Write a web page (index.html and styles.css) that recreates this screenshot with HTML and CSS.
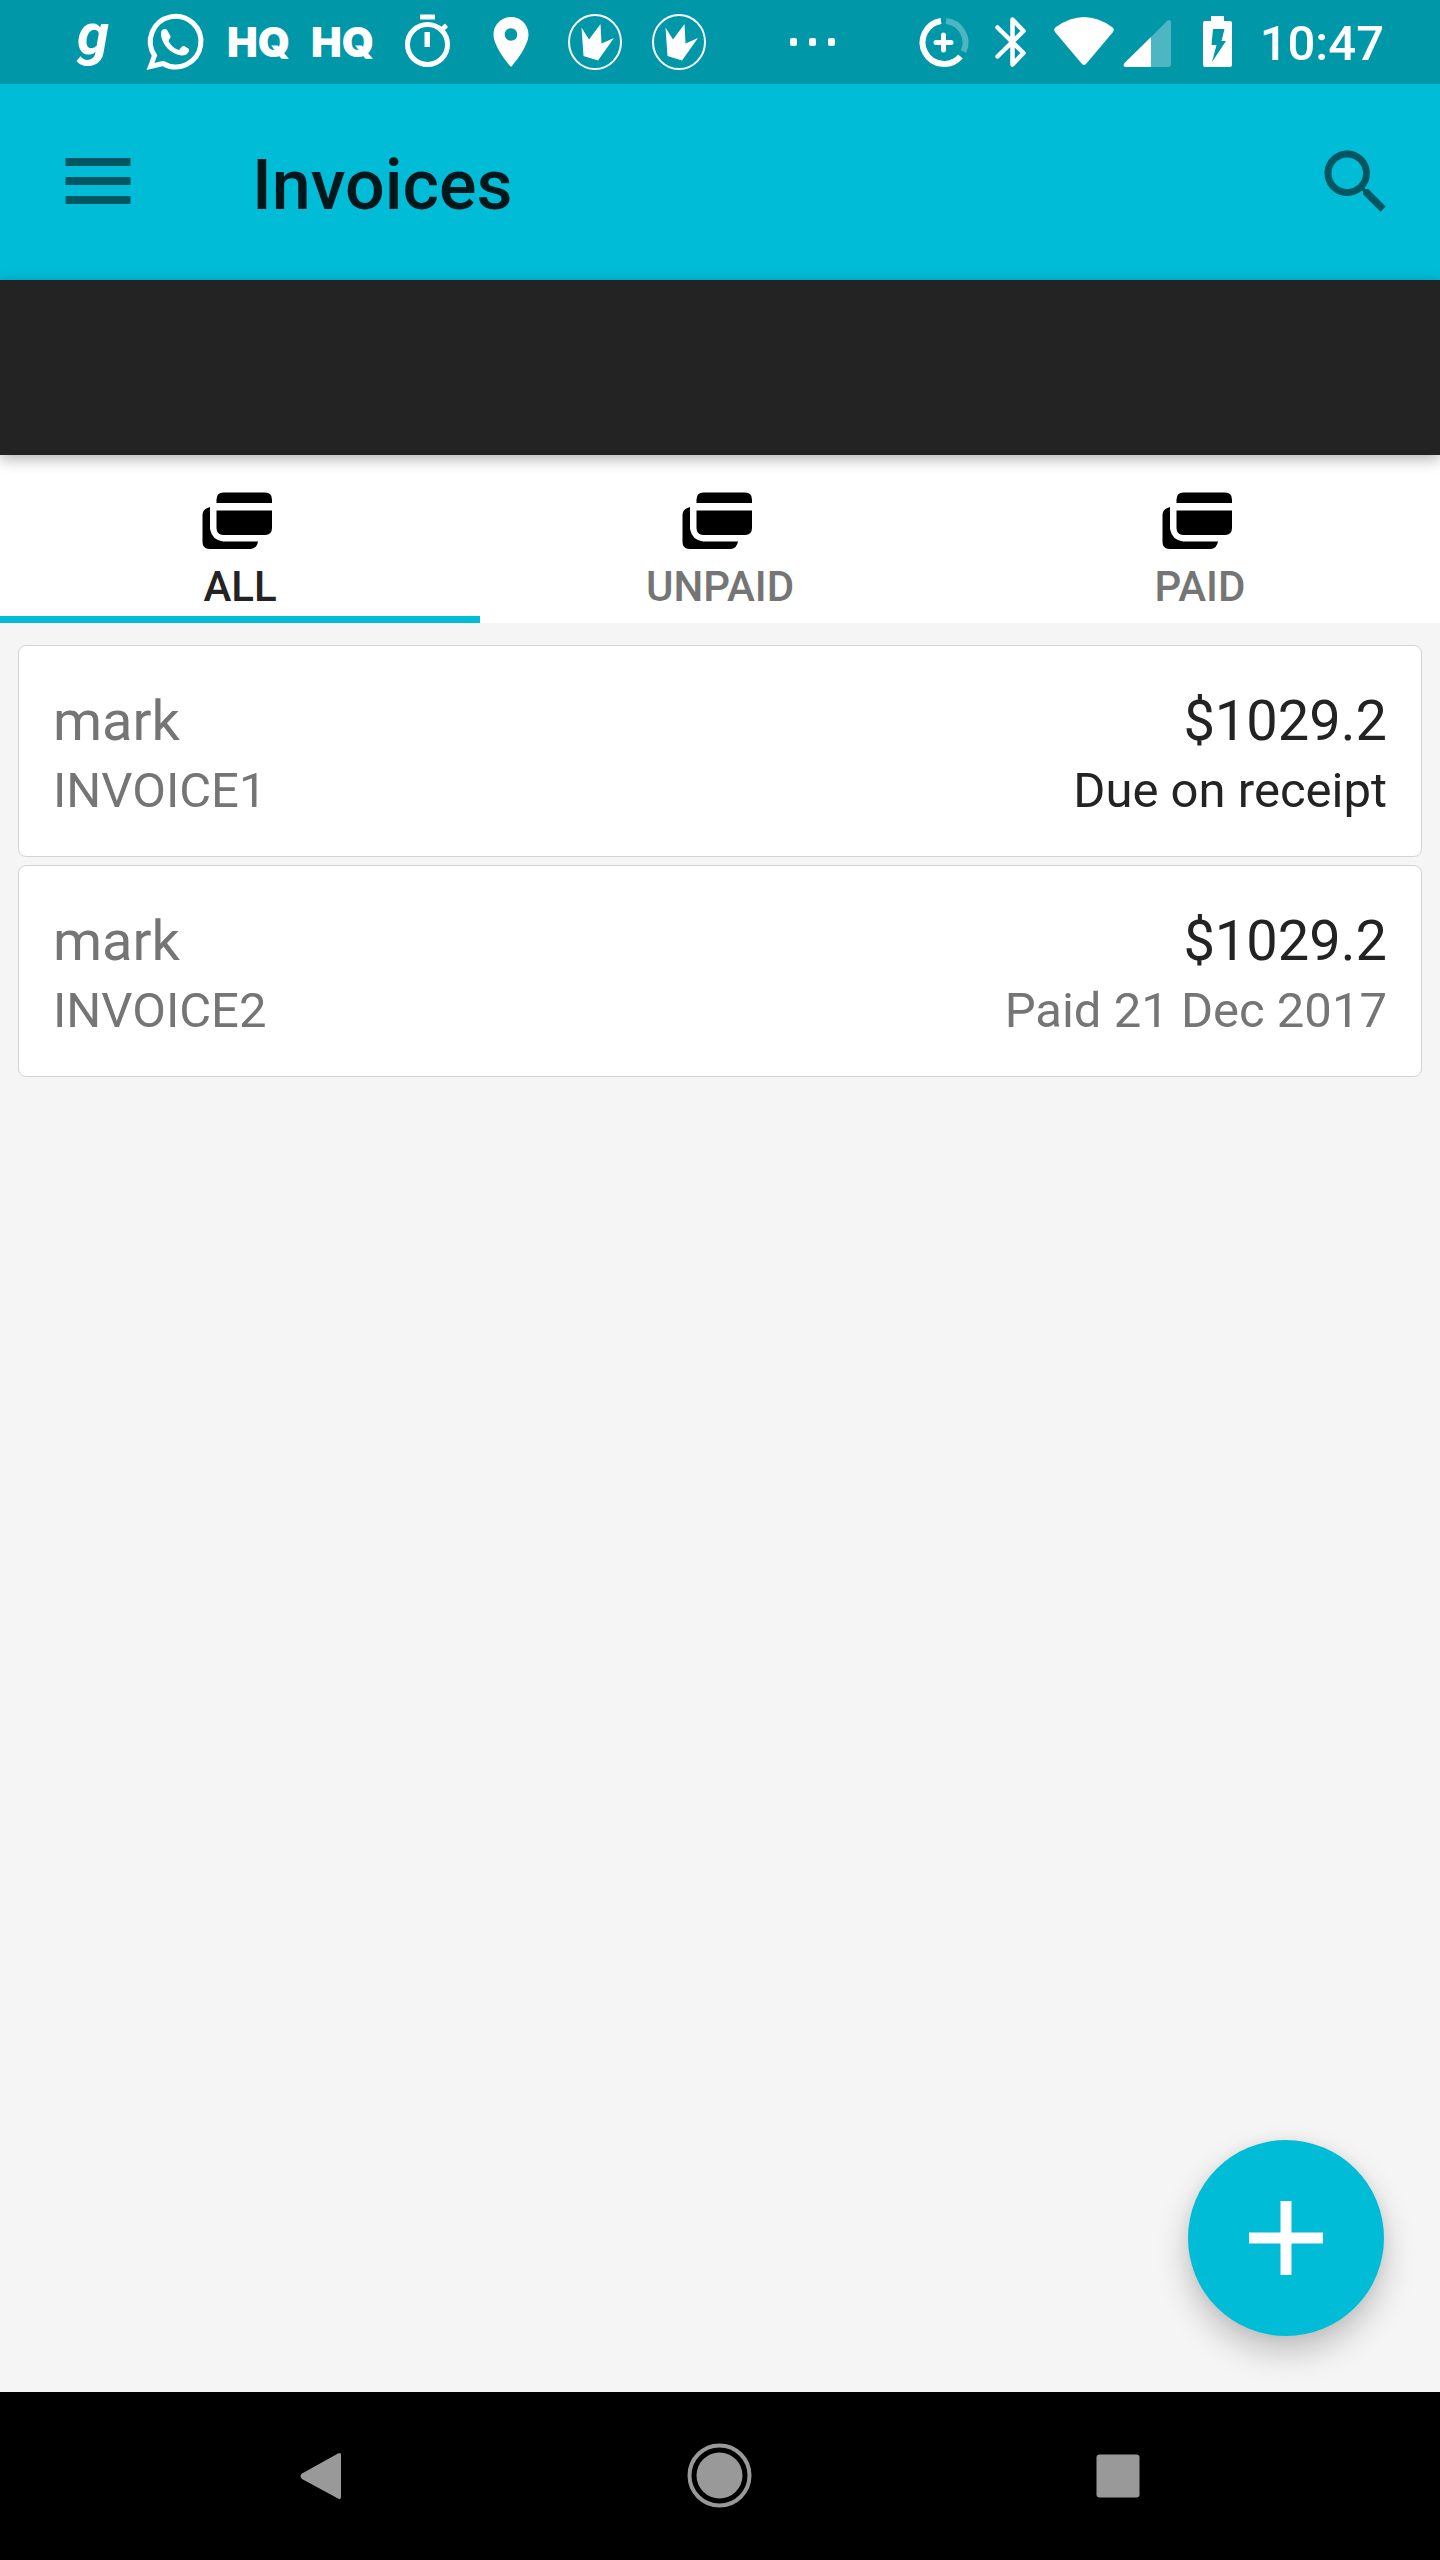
FILE: index.html
```html
<!DOCTYPE html>
<html lang="en">
<head>
<meta charset="utf-8">
<meta name="viewport" content="width=device-width, initial-scale=1">
<title>Invoices</title>
<link rel="stylesheet" href="styles.css">
</head>
<body>
<svg class="defs" aria-hidden="true">
  <symbol id="cards" viewBox="0 0 84 84">
    <path d="M18.500 25V21.500Q18.500 14.500 25.500 14.500H67Q74 14.500 74 21.500V25Z"/>
    <path d="M18.500 32.500H74V50Q74 57 67 57H25.500Q18.500 57 18.500 50Z"/>
    <path d="M12 29Q4.500 31 4.500 37V64Q4.500 71 11.500 71H53Q59 70 60 63.500H25Q14 62 12 51Z"/>
  </symbol>
  <symbol id="crown" viewBox="0 0 84 84">
    <ellipse cx="41" cy="42" rx="26" ry="27" fill="none" stroke="currentColor" stroke-width="2"/>
    <path d="M27.500 27.500L35 39.500 46.500 24 47.500 43.500 60 38 44 60.500 29.500 56Z"/>
  </symbol>
</svg>
<div class="screen">
  <div class="status-bar">
    <div class="notifications">
      <svg class="note" viewBox="0 0 84 84"><text class="mark-g" x="27" y="54">g</text></svg>
      <svg class="note" viewBox="0 0 84 84">
        <path d="M16.500 66.500L20.500 55.500A25.300 25.300 0 1 1 29 63.500Z" fill="none" stroke="currentColor" stroke-width="5"/>
        <path d="M27 33Q27 30 30 29Q32 28.500 33 30L36.500 36Q37 38 35.500 39L34.500 41Q38 48 45 50L47.500 47Q49 45.500 51 46.500L55 49V51Q53 56 47 55.500Q31 52 27 36Z"/>
      </svg>
      <svg class="note" viewBox="0 0 84 84"><text class="mark-hq" x="9" y="57">HQ</text></svg>
      <svg class="note" viewBox="0 0 84 84"><text class="mark-hq" x="9" y="57">HQ</text></svg>
      <svg class="note" viewBox="0 0 84 84">
        <circle cx="41.500" cy="44.500" r="20" fill="none" stroke="currentColor" stroke-width="5"/>
        <path d="M34 14.500H49V19.500H34ZM38.500 32H44V47H38.500ZM55 27L59 23.500 62 27 58 31Z"/>
      </svg>
      <svg class="note" viewBox="0 0 84 84">
        <path transform="translate(11 12) scale(2.500)" d="M12 2C8.130 2 5 5.130 5 9c0 5.250 7 13 7 13s7-7.750 7-13c0-3.870-3.130-7-7-7zm0 9.500c-1.380 0-2.500-1.120-2.500-2.500s1.120-2.500 2.500-2.500 2.500 1.120 2.500 2.500-1.120 2.500-2.500 2.500z"/>
      </svg>
      <svg class="note"><use href="#crown"/></svg>
      <svg class="note"><use href="#crown"/></svg>
      <svg class="note more" viewBox="0 0 84 84">
        <rect x="20" y="38" width="7" height="8" rx="2"/><rect x="39" y="38" width="7" height="8" rx="2"/><rect x="58" y="38" width="7" height="8" rx="2"/>
      </svg>
    </div>
    <div class="system">
      <svg class="sys" viewBox="0 0 68 84" fill="none" stroke="currentColor" stroke-width="6">
        <path d="M31 21A21.600 21.600 0 1 0 50.500 56.500"/>
        <path d="M36 21A21.600 21.600 0 0 1 53.500 51.500" opacity=".3"/>
        <path d="M33.500 35V50M26 42.500H41" stroke-width="5" stroke-linecap="round"/>
      </svg>
      <svg class="sys" viewBox="0 0 68 84" fill="none" stroke="currentColor" stroke-width="4.500" stroke-linecap="round" stroke-linejoin="round">
        <path d="M19.500 27.500L45.500 53 34.500 64.500V19.500L45.500 31 19.500 56.500"/>
      </svg>
      <svg class="sys" viewBox="0 0 68 84"><path d="M10 27Q38 7 66 27Q69 29 67 32L40 64Q38 66 36 64L9 32Q7 29 10 27Z"/></svg>
      <svg class="sys" viewBox="0 0 68 84">
        <path d="M37 37L10.500 63Q8 67 12 67H37Z"/>
        <path d="M37 37L53 21Q57 18.500 57 23V64Q57 67 54 67H37Z" opacity=".3"/>
      </svg>
      <svg class="sys" viewBox="0 0 68 84">
        <path fill-rule="evenodd" d="M29 16H42V21H48Q50 21 50 23V65Q50 67 48 67H23Q21 67 21 65V23Q21 21 23 21H29ZM31 29L29.500 45H34.500L30 62 44 41H39.500L42.500 29Z"/>
      </svg>
      <time class="clock">10:47</time>
    </div>
  </div>

  <header class="app-bar">
    <button class="icon-button" aria-label="Open menu"><svg class="icon" viewBox="0 0 84 84"><path d="M9.500 18H74.500V26H9.500ZM9.500 37H74.500V45H9.500ZM9.500 56H74.500V64H9.500Z"/></svg></button>
    <h1 class="title">Invoices</h1>
    <button class="icon-button" aria-label="Search"><svg class="icon" viewBox="0 0 24 24"><path d="M15.500 14h-.790l-.280-.270C15.410 12.590 16 11.110 16 9.500 16 5.910 13.090 3 9.500 3S3 5.910 3 9.500 5.910 16 9.500 16c1.610 0 3.090-.590 4.230-1.570l.270.280v.790l5 4.990L20.490 19l-4.990-5zm-6 0C7.010 14 5 11.990 5 9.500S7.010 5 9.500 5 14 7.010 14 9.500 11.990 14 9.500 14z"/></svg></button>
  </header>
  <div class="banner"></div>

  <nav class="tabs" role="tablist" aria-label="Invoice filter">
    <button class="tab selected" role="tab" aria-selected="true"><svg class="icon tab-icon"><use href="#cards"/></svg><span>ALL</span></button>
    <button class="tab" role="tab" aria-selected="false"><svg class="icon tab-icon"><use href="#cards"/></svg><span>UNPAID</span></button>
    <button class="tab" role="tab" aria-selected="false"><svg class="icon tab-icon"><use href="#cards"/></svg><span>PAID</span></button>
  </nav>

  <main class="content">
    <ul class="invoices">
      <li class="invoice">
        <div class="side"><span class="primary muted">mark</span><span class="secondary muted">INVOICE1</span></div>
        <div class="side end"><span class="primary">$1029.2</span><span class="secondary">Due on receipt</span></div>
      </li>
      <li class="invoice">
        <div class="side"><span class="primary muted">mark</span><span class="secondary muted">INVOICE2</span></div>
        <div class="side end"><span class="primary">$1029.2</span><span class="secondary muted">Paid 21 Dec 2017</span></div>
      </li>
    </ul>
    <button class="fab" aria-label="Add invoice"><svg class="icon" viewBox="0 0 84 84"><path d="M5 36.500H36.500V5H47.500V36.500H79V47.500H47.500V79H36.500V47.500H5Z"/></svg></button>
  </main>

  <div class="system-nav">
    <button class="nav-button" aria-label="Back"><svg class="icon" viewBox="0 0 84 84"><path d="M58 19.500Q61 18 61 21V63Q61 66 58 64.500L22 45Q19 42 22 39.500Z"/></svg></button>
    <button class="nav-button" aria-label="Home"><svg class="icon" viewBox="0 0 84 84"><circle cx="41.500" cy="41.500" r="23"/><circle cx="41.500" cy="41.500" r="30" fill="none" stroke="currentColor" stroke-width="4"/></svg></button>
    <button class="nav-button" aria-label="Recent apps"><svg class="icon" viewBox="0 0 84 84"><rect x="20.500" y="20.500" width="43" height="43" rx="3"/></svg></button>
  </div>
</div>
</body>
</html>
```
FILE: styles.css
```css
:root {
  --accent: #00bcd7;
  --accent-dark: #0097a8;
  --text: #232323;
  --muted: #757575;
}

* {
  box-sizing: border-box;
}

body {
  margin: 0;
  font-family: Roboto, "Liberation Sans", sans-serif;
  color: var(--text);
}

button {
  display: flex;
  align-items: center;
  justify-content: center;
  margin: 0;
  padding: 0;
  border: 0;
  background: none;
  font: inherit;
  color: inherit;
}

svg {
  display: block;
  flex: none;
  fill: currentColor;
}

svg[fill="none"] {
  fill: none;
}

.defs {
  display: none;
}

.screen {
  display: flex;
  flex-direction: column;
  min-height: 100vh;
  background: #f5f5f5;
}

.status-bar {
  display: flex;
  justify-content: space-between;
  height: 84px;
  padding: 0 56px 0 50px;
  background: var(--accent-dark);
  color: #fff;
}

.notifications,
.system {
  display: flex;
  align-items: center;
}

.note {
  width: 84px;
  height: 84px;
}

.more {
  margin-left: 48px;
}

.mark-g {
  font: italic 700 58px Roboto, sans-serif;
}

.mark-hq {
  font: 900 41px Inter, sans-serif;
}

.sys {
  width: 68px;
  height: 84px;
}

.clock {
  margin-left: 10px;
  padding-top: 4px;
  font-size: 49px;
  font-weight: 500;
  line-height: 58px;
}

.icon {
  width: 84px;
  height: 84px;
}

.app-bar {
  display: flex;
  align-items: center;
  height: 196px;
  padding: 0 42px 0 56px;
  background: var(--accent);
}

.icon-button {
  color: #005661;
}

.title {
  flex: 1;
  margin: 0;
  padding: 6px 0 0 112px;
  font-size: 70px;
  font-weight: 500;
  line-height: 82px;
  color: #00181c;
}

.banner {
  position: relative;
  height: 175px;
  background: #232323;
  box-shadow: 0 4px 14px rgba(0, 0, 0, 0.3);
}

.tabs {
  display: grid;
  grid-template-columns: repeat(3, 1fr);
  background: #fff;
}

.tab {
  flex-direction: column;
  padding: 23px 0 4px;
  border-bottom: 7px solid transparent;
  font-size: 42px;
  font-weight: 500;
  line-height: 50px;
  color: var(--muted);
}

.selected {
  border-color: var(--accent);
  color: var(--text);
}

.tab-icon {
  color: #000;
}

.content {
  position: relative;
  flex: 1;
  padding: 22px 18px;
}

.invoices {
  display: flex;
  flex-direction: column;
  gap: 8px;
  margin: 0;
  padding: 0;
  list-style: none;
}

.invoice {
  display: flex;
  justify-content: space-between;
  padding: 42px 34px 36px;
  border: 1px solid #d3d3d3;
  border-radius: 8px;
  background: #fff;
}

.side {
  display: flex;
  flex-direction: column;
  gap: 8px;
}

.end {
  align-items: flex-end;
}

.primary {
  font-size: 56px;
  line-height: 66px;
}

.secondary {
  font-size: 49px;
  line-height: 58px;
}

.muted {
  color: var(--muted);
}

.fab {
  position: absolute;
  right: 56px;
  bottom: 56px;
  width: 196px;
  height: 196px;
  border-radius: 50%;
  background: var(--accent);
  color: #fff;
  box-shadow: 0 16px 32px rgba(0, 0, 0, 0.22), 0 0 14px rgba(0, 0, 0, 0.05);
}

.system-nav {
  display: grid;
  grid-template-columns: repeat(3, 1fr);
  height: 168px;
  padding: 0 123px;
  background: #000;
  color: #999;
}
```
